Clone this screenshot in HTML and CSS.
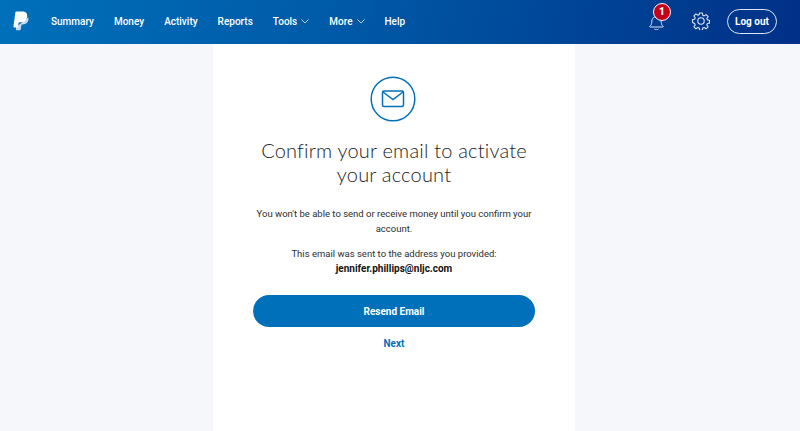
FILE: index.html
```html
<!DOCTYPE html>
<html lang="en">
<head>
<meta charset="utf-8">
<title>Confirm your email</title>
<link rel="stylesheet" href="styles.css">
</head>
<body>
<header class="topbar">
  <svg class="logo" viewBox="0 0 16 20" width="16" height="20"><path d="M15.300 6.200c.8 3.900-1.600 7.200-5.600 7.200H8.500l-.8 5c-.1.500-.4.800-.9.800H3.700c-.6 0-.9-.4-.8-.9l.4-2.300z" fill="#c9dcf1"/><path d="M3.300.5h5.600c3.700 0 5.700 1.900 5.300 5-.5 3.700-3 5.800-6.500 5.800H6.500c-.5 0-.8.300-.9.800l-.6 3.600c-.1.500-.4.800-.9.800H1.200c-.6 0-.9-.4-.8-.9L2.400 1.300c.1-.5.400-.8.900-.8z" fill="#fff"/></svg>
  <nav class="nav">
    <a class="nav-item">Summary</a>
    <a class="nav-item">Money</a>
    <a class="nav-item">Activity</a>
    <a class="nav-item">Reports</a>
    <a class="nav-item">Tools <svg class="caret" viewBox="0 0 8 5" width="8" height="5"><path d="M.5.5 4 4 7.500.5" fill="none" stroke="#b9cfe8" stroke-width="1"/></svg></a>
    <a class="nav-item">More <svg class="caret" viewBox="0 0 8 5" width="8" height="5"><path d="M.5.5 4 4 7.500.5" fill="none" stroke="#b9cfe8" stroke-width="1"/></svg></a>
    <a class="nav-item">Help</a>
  </nav>
  <div class="actions">
    <div class="bell">
      <svg viewBox="0 0 18 21" width="15" height="17.500"><path d="M1 16c1.500-1.300 2.200-2.600 2.300-5 .1-3.500 1.300-6.500 5.700-6.500s5.600 3 5.700 6.500c.1 2.400.8 3.700 2.300 5 .3.400 0 .8-.4.800H1.400c-.4 0-.7-.4-.4-.8z" fill="none" stroke="#dbe7f5" stroke-width="1.200"/><path d="M6.500 19.300c1.500 1 3.500 1 5 0" fill="none" stroke="#dbe7f5" stroke-width="1.200"/></svg>
      <span class="badge">1</span>
    </div>
    <svg class="gear" viewBox="0 0 18 18" width="18" height="18"><path d="M7.600 1h2.800l.4 2.300 1.400.6 1.900-1.300 2 2-1.300 1.900.6 1.400 2.100.4v2.800l-2.100.4-.6 1.400 1.300 1.900-2 2-1.900-1.300-1.400.6-.4 2.100H7.600l-.4-2.100-1.400-.6-1.900 1.300-2-2 1.300-1.900-.6-1.400L.5 10.400V7.600l2.100-.4.6-1.400-1.300-1.900 2-2 1.900 1.300 1.400-.6z" fill="none" stroke="#dbe7f5" stroke-width="1.100" stroke-linejoin="round"/><circle cx="9" cy="9" r="3.200" fill="none" stroke="#dbe7f5" stroke-width="1.100"/></svg>
    <a class="logout">Log out</a>
  </div>
</header>
<main class="page">
  <section class="card">
    <svg class="mail" viewBox="0 0 46 46" width="46" height="46"><circle cx="23" cy="23" r="21.800" fill="#fff" stroke="#0070ba" stroke-width="1.500"/><rect x="12.500" y="15" width="21" height="15.500" rx="1.500" fill="none" stroke="#0070ba" stroke-width="1.500"/><path d="M13 16l10 7.500L33 16" fill="none" stroke="#0070ba" stroke-width="1.500"/></svg>
    <h1 class="title">Confirm your email to activate your account</h1>
    <p class="lead">You won't be able to send or receive money until you confirm your account.</p>
    <p class="sent">This email was sent to the address you provided:<br><strong class="addr">jennifer.phillips@nljc.com</strong></p>
    <button class="resend">Resend Email</button>
    <a class="next">Next</a>
  </section>
</main>
</body>
</html>
```
FILE: styles.css
```css
* { box-sizing: border-box; }
html, body { margin: 0; height: 100%; overflow: hidden; }
body { background: #f5f7fa; font-family: Roboto, "Noto Sans", sans-serif; color: #2c2e2f; }
.topbar {
  height: 44px;
  display: flex;
  align-items: center;
  padding: 0 23px 2px 13px;
  background: linear-gradient(100deg, #0070ba 0%, #0058a6 45%, #003087 100%);
  color: #fff;
}
.logo { flex: none; margin-right: 22px; }
.nav { display: flex; gap: 20px; font-size: 10px; }
.nav-item { display: flex; align-items: center; gap: 4px; color: #fff; font-weight: 500; }
.actions { margin-left: auto; display: flex; align-items: center; }
.bell { position: relative; width: 18px; height: 21px; margin-right: 27px; padding: 2px 0 0 2px; }
.bell svg { display: block; }
.badge {
  position: absolute; left: 6px; top: -8px;
  width: 18px; height: 18px; border-radius: 50%;
  background: #c4001a; border: 1.500px solid #fff;
  color: #fff; font-size: 10px; font-weight: 900; line-height: 15px; text-align: center;
}
.gear { margin-right: 17px; }
.logout {
  width: 50px; height: 25px; border: 1px solid #dbe7f5; border-radius: 13px;
  display: flex; align-items: center; justify-content: center;
  font-size: 10px; font-weight: 700; color: #fff;
}
.page { display: flex; justify-content: center; padding-right: 12px; }
.card {
  width: 362px; height: 387px; background: #fff;
  display: flex; flex-direction: column; align-items: center;
  padding: 32px 40px 0;
}
.mail { display: block; flex: none; margin-right: 2px; }
.title {
  margin: 16px 0 0; width: 280px;
  font: 300 20px/24px "Lato", "Noto Sans", sans-serif;
  color: #222; text-align: center; letter-spacing: .2px;
}
.lead { margin: 20px 0 0; font-size: 9.500px; line-height: 15px; text-align: center; }
.sent { margin: 10px 0 0; font-size: 9.500px; line-height: 15px; text-align: center; }
.addr { font-weight: 700; font-size: 10px; color: #111; }
.resend {
  margin-top: 19px; width: 282px; height: 32px; flex: none;
  border: 0; border-radius: 16px; background: #0070ba;
  color: #fff; font: 700 10px Roboto, sans-serif;
}
.next { margin-top: 10px; font-size: 10px; line-height: 14px; font-weight: 700; color: #0070ba; }
```
